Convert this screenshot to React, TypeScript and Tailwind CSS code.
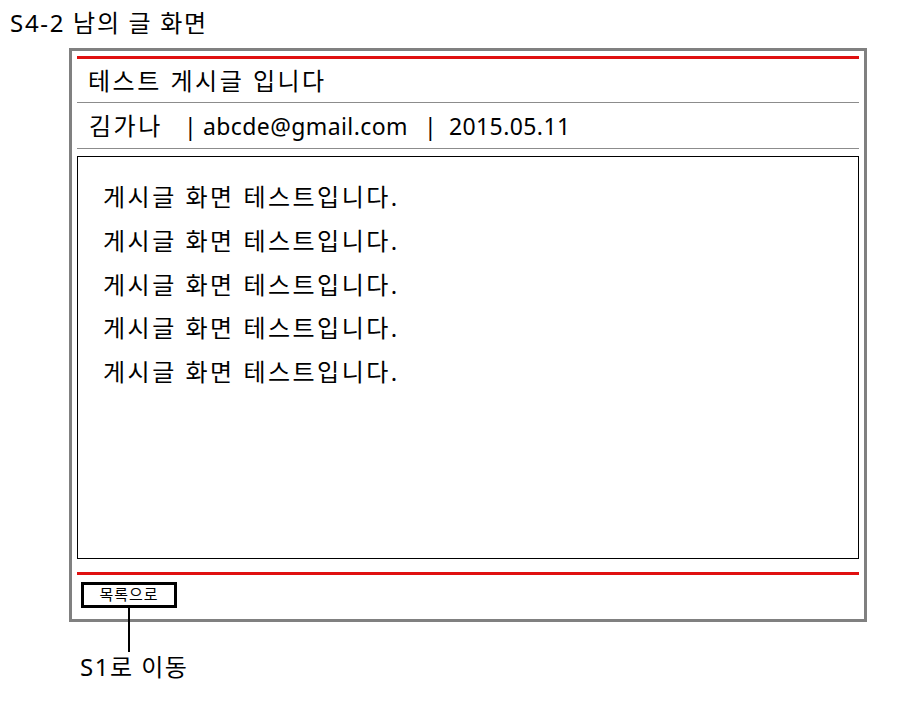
const font = { fontFamily: '"Noto Sans", "Noto Sans CJK KR", sans-serif' };

const lines = Array.from({ length: 5 }, () => "게시글 화면 테스트입니다.");

export default function App() {
  return (
    <div className="w-[920px] h-[705px] bg-white text-black" style={font}>
      {/* page title */}
      <div className="pl-[10px] pt-[6px] h-[48px] text-[24px] leading-[34px] tracking-[1.7px]">S4-2 남의 글 화면</div>

      {/* post frame */}
      <div className="ml-[69px] w-[798px] h-[574px] border-[3px] border-[#808080] px-[5px] pt-[5px] flex flex-col">
        <div className="h-[3px] bg-[#e01010] shrink-0" />
        <div className="h-[44px] border-b border-[#8c8c8c] pl-[11px] text-[24px] leading-[44px] tracking-[2.5px] shrink-0">
          테스트 게시글 입니다
        </div>
        <div className="h-[46px] border-b border-[#8c8c8c] pl-[12px] flex items-center text-[23px] leading-[46px] shrink-0">
          <span className="w-[95px] shrink-0 tracking-[2.5px] text-[24px]">김가나</span>
          <span className="w-[19px] shrink-0">|</span>
          <span className="tracking-[0.4px]">abcde@gmail.com</span>
          <span className="ml-[16px] w-[25px] shrink-0">|</span>
          <span className="tracking-[0.4px]">2015.05.11</span>
        </div>
        <div className="mt-[7px] h-[403px] border border-black pl-[25px] pt-[22px] shrink-0">
          {lines.map((t, i) => (
            <div key={i} className="h-[43.8px] text-[24px] leading-[36px] tracking-[2.5px]">
              {t}
            </div>
          ))}
        </div>
        <div className="mt-[13px] h-[3px] bg-[#e01010] shrink-0" />
        <div className="mt-[7px] ml-[4px] w-[96px] h-[26px] border-[3px] border-black text-[15px] leading-[19px] tracking-[1px] text-center shrink-0">
          목록으로
        </div>
      </div>

      {/* annotation */}
      <div className="-mt-[14px] ml-[128px] w-[2px] h-[44px] bg-black" />
      <div className="ml-[80px] text-[24px] leading-[30px] tracking-[1.5px]">S1로 이동</div>
    </div>
  );
}
